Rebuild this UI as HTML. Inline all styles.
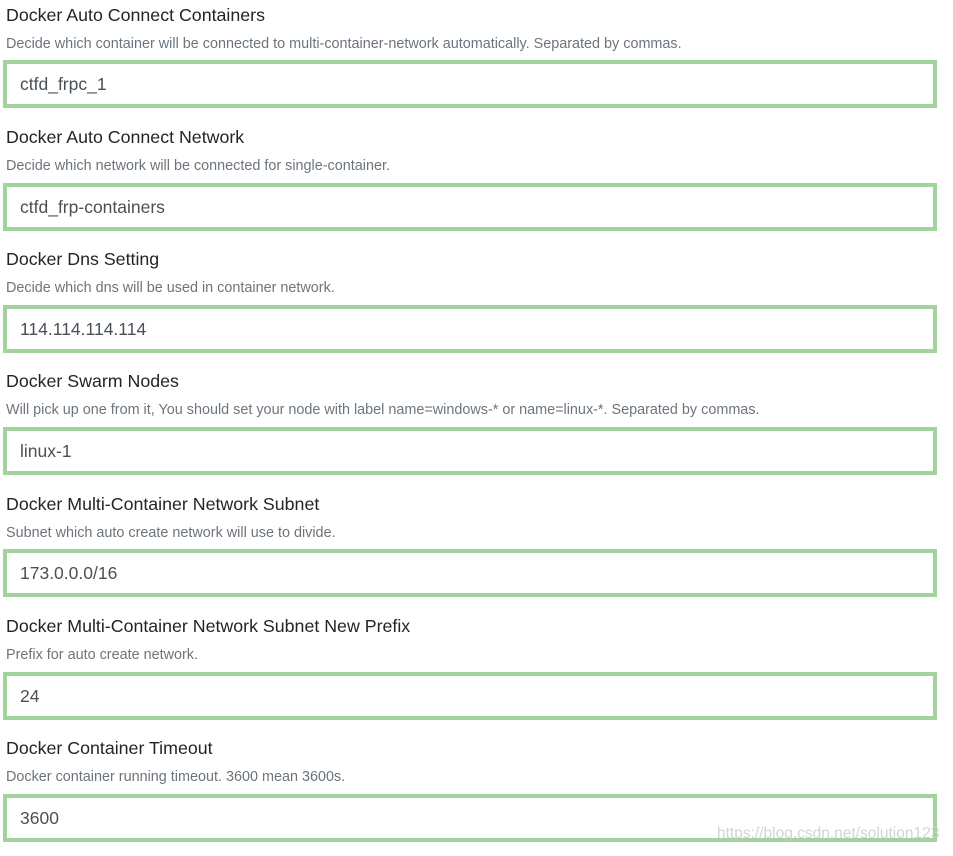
<!DOCTYPE html>
<html><head><meta charset="utf-8"><style>
body{margin:0;background:#fff;width:953px;height:856px;position:relative;overflow:hidden;font-family:"Liberation Sans",sans-serif}
.g{position:absolute;left:0;width:953px;height:122px}
.t{position:absolute;left:6px;top:5px;font-size:17.8px;color:#212529;white-space:nowrap}
.d{position:absolute;left:6px;top:36px;font-size:14.4px;color:#6c757d;white-space:nowrap}
.b{position:absolute;left:3px;top:60px;width:926px;height:40px;border:4px solid #a3d39c;background:#fff}
.v{position:absolute;left:13px;top:10px;font-size:17.5px;color:#495057}
.w{position:absolute;left:717px;top:825px;font-size:15.5px;color:rgba(200,200,200,.8);white-space:nowrap}
</style></head><body>
<div class="g" style="top:0"><div class="t">Docker Auto Connect Containers</div><div class="d">Decide which container will be connected to multi-container-network automatically. Separated by commas.</div><div class="b"><div class="v">ctfd_frpc_1</div></div></div>
<div class="g" style="top:122px"><div class="t">Docker Auto Connect Network</div><div class="d">Decide which network will be connected for single-container.</div><div class="b" style="top:61px"><div class="v">ctfd_frp-containers</div></div></div>
<div class="g" style="top:244px"><div class="t">Docker Dns Setting</div><div class="d">Decide which dns will be used in container network.</div><div class="b" style="top:61px"><div class="v">114.114.114.114</div></div></div>
<div class="g" style="top:366px"><div class="t">Docker Swarm Nodes</div><div class="d">Will pick up one from it, You should set your node with label name=windows-* or name=linux-*. Separated by commas.</div><div class="b" style="top:61px"><div class="v">linux-1</div></div></div>
<div class="g" style="top:489px"><div class="t">Docker Multi-Container Network Subnet</div><div class="d">Subnet which auto create network will use to divide.</div><div class="b" style="top:60px"><div class="v">173.0.0.0/16</div></div></div>
<div class="g" style="top:611px"><div class="t">Docker Multi-Container Network Subnet New Prefix</div><div class="d">Prefix for auto create network.</div><div class="b" style="top:61px"><div class="v">24</div></div></div>
<div class="g" style="top:733px"><div class="t">Docker Container Timeout</div><div class="d">Docker container running timeout. 3600 mean 3600s.</div><div class="b" style="top:61px"><div class="v">3600</div></div></div>
<div class="w">https://blog.csdn.net/solution123</div>
</body></html>
